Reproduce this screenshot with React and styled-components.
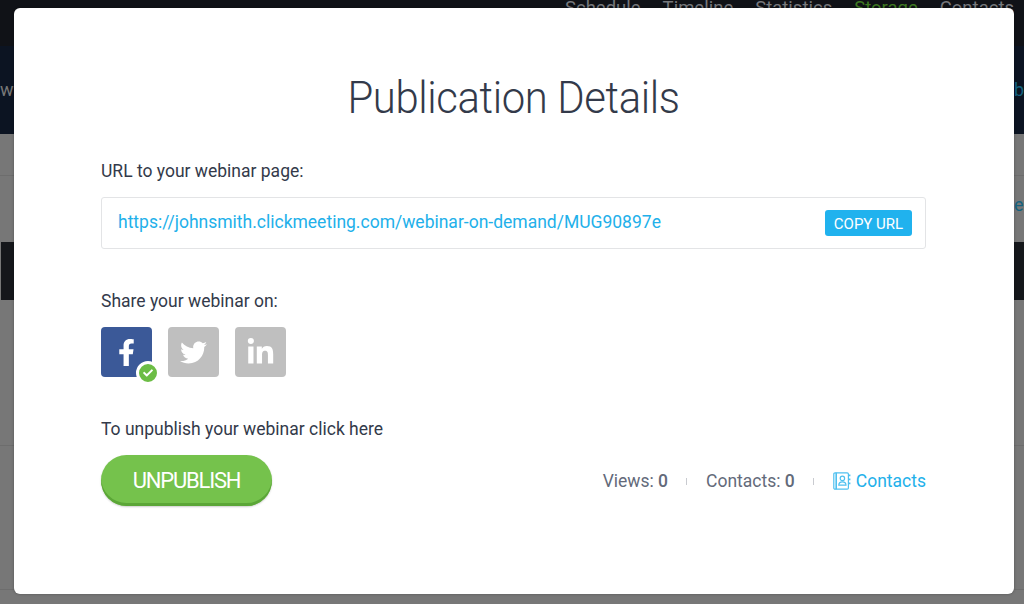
import styled, { createGlobalStyle } from "styled-components";
import { FaFacebookF, FaTwitter, FaLinkedinIn, FaCheck } from "react-icons/fa";

const GlobalStyle = createGlobalStyle`
  html, body {
    margin: 0;
    height: 100%;
    overflow: hidden;
    background: #777;
    font-family: Roboto, "Liberation Sans", sans-serif;
  }
`;

const Page = styled.div`
  position: relative;
  width: 1024px;
  height: 604px;
  overflow: hidden;
  background: #777777;
`;

const TopBar = styled.div`
  height: 46px;
  box-sizing: border-box;
  padding-right: 10px;
  background: #101217;
  display: flex;
  justify-content: flex-end;
  gap: 22px;
  font-size: 18.5px;
  line-height: 16px;
`;

const NavItem = styled.span`
  color: ${(p) => (p.$active ? "#3f7a22" : "#77797d")};
`;

const SubBar = styled.div`
  height: 88px;
  background: #0c1422;
  display: flex;
  align-items: center;
  justify-content: space-between;
  font-size: 18px;
`;

const SubEdge = styled.span`
  color: ${(p) => (p.$blue ? "#14627f" : "#777")};
  margin-top: -2px;
`;

const Band = styled.div`
  height: 41px;
  border-bottom: 1px solid #6d6d6d;
`;

const Hint = styled.div`
  height: 66px;
  box-sizing: border-box;
  padding: 18px 0 0 1014px;
  white-space: nowrap;
  font-size: 18px;
  color: #14627f;
`;

const DarkRow = styled.div`
  height: 58px;
  margin-left: 1px;
  background: #15171b;
`;

const Row = styled.div`
  height: ${(p) => p.$h}px;
  border-bottom: 1px solid #6d6d6d;
`;

const Modal = styled.div`
  position: absolute;
  left: 14px;
  top: 8px;
  width: 1000px;
  height: 586px;
  box-sizing: border-box;
  padding: 0 88px 0 87px;
  background: #fff;
  border-radius: 6px;
  box-shadow: 0 0 3px rgba(0, 0, 0, 0.3);
  display: flex;
  flex-direction: column;
  color: #333a4a;
`;

const Title = styled.h1`
  margin: 60px 0 0;
  font-size: 45px;
  line-height: 60px;
  font-weight: 300;
  letter-spacing: -0.4px;
  text-align: center;
  transform: scaleX(0.93);
  color: #333a4a;
`;

const Label = styled.div`
  font-size: 17.5px;
  line-height: 22px;
  margin-top: ${(p) => p.$mt}px;
  color: #333a4a;
`;

const UrlBox = styled.div`
  margin-top: 15px;
  height: 52px;
  box-sizing: border-box;
  border: 1px solid #e3e4e6;
  border-radius: 3px;
  display: flex;
  align-items: center;
  justify-content: space-between;
  padding: 0 13px 0 16px;
`;

const UrlText = styled.a`
  font-size: 17.5px;
  color: #22b0ea;
  margin-top: -2px;
`;

const CopyButton = styled.button`
  width: 87px;
  height: 26px;
  padding: 2px 0 0;
  border: 0;
  border-radius: 3px;
  background: #20b2ee;
  color: #fff;
  font-family: inherit;
  font-size: 15px;
`;

const Socials = styled.div`
  margin-top: 15px;
  display: flex;
  gap: 16px;
`;

const Social = styled.div`
  position: relative;
  width: 51px;
  height: 50px;
  border-radius: 4px;
  background: ${(p) => p.$bg};
  color: #fff;
  display: flex;
  align-items: center;
  justify-content: center;
`;

const CheckBadge = styled.span`
  position: absolute;
  right: -8px;
  bottom: -8px;
  width: 18px;
  height: 18px;
  border: 3px solid #fff;
  border-radius: 50%;
  background: #6cbd45;
  color: #fff;
  display: flex;
  align-items: center;
  justify-content: center;
`;

const Footer = styled.div`
  margin-top: 15px;
  display: flex;
  align-items: center;
  justify-content: space-between;
`;

const UnpublishButton = styled.button`
  width: 171px;
  height: 51px;
  padding: 0;
  border: 0;
  border-radius: 26px;
  background: #75c24c;
  box-shadow: inset 0 -3px 0 #5ba637, 0 1px 2px rgba(0, 0, 0, 0.2);
  color: #fff;
  font-family: inherit;
  font-size: 22px;
  font-weight: 400;
  letter-spacing: -1.2px;
`;

const Stats = styled.div`
  margin-top: 1px;
  display: flex;
  align-items: center;
  font-size: 17.5px;
  color: #636a7a;
`;

const Stat = styled.span`
  b {
    font-weight: 500;
  }
`;

const Divider = styled.i`
  width: 1px;
  height: 7px;
  margin: 0 19px 0 18px;
  background: #c9cbd0;
`;

const ContactsLink = styled.a`
  display: flex;
  align-items: center;
  gap: 5px;
  color: #22b0ea;
`;

const ContactsIcon = () => (
  <svg width="18" height="18" viewBox="0 0 18 18" fill="none" stroke="#4fc0ef" strokeWidth="1.2">
    <rect x="0.8" y="0.8" width="14.6" height="16.4" rx="1.2" />
    <path d="M3.2 0.8V17.2" strokeWidth="1.6" />
    <circle cx="9.4" cy="6.4" r="2.2" />
    <path d="M5.8 13.2c0-2.2 1.6-3.4 3.6-3.4s3.6 1.2 3.6 3.4z" />
    <path d="M15.4 3.4h2M15.4 7.4h2M15.4 11.4h2" strokeWidth="1.6" />
  </svg>
);

export default function App() {
  return (
    <Page>
      <GlobalStyle />
      <TopBar>
        <NavItem>Schedule</NavItem>
        <NavItem>Timeline</NavItem>
        <NavItem>Statistics</NavItem>
        <NavItem $active>Storage</NavItem>
        <NavItem>Contacts</NavItem>
      </TopBar>
      <SubBar>
        <SubEdge>ww</SubEdge>
        <SubEdge $blue>b</SubEdge>
      </SubBar>
      <Band />
      <Hint>e?</Hint>
      <DarkRow />
      <Row $h={145} />
      <Row $h={143} />
      <Modal>
        <Title>Publication Details</Title>
        <Label $mt={32}>URL to your webinar page:</Label>
        <UrlBox>
          <UrlText>https://johnsmith.clickmeeting.com/webinar-on-demand/MUG90897e</UrlText>
          <CopyButton>COPY URL</CopyButton>
        </UrlBox>
        <Label $mt={41}>Share your webinar on:</Label>
        <Socials>
          <Social $bg="#3b5998">
            <FaFacebookF size={27} />
            <CheckBadge>
              <FaCheck size={10} />
            </CheckBadge>
          </Social>
          <Social $bg="#bfbfbf">
            <FaTwitter size={27} />
          </Social>
          <Social $bg="#bfbfbf">
            <FaLinkedinIn size={29} />
          </Social>
        </Socials>
        <Label $mt={41}>To unpublish your webinar click here</Label>
        <Footer>
          <UnpublishButton>UNPUBLISH</UnpublishButton>
          <Stats>
            <Stat>
              Views: <b>0</b>
            </Stat>
            <Divider />
            <Stat>
              Contacts: <b>0</b>
            </Stat>
            <Divider />
            <ContactsLink>
              <ContactsIcon />
              Contacts
            </ContactsLink>
          </Stats>
        </Footer>
      </Modal>
    </Page>
  );
}
